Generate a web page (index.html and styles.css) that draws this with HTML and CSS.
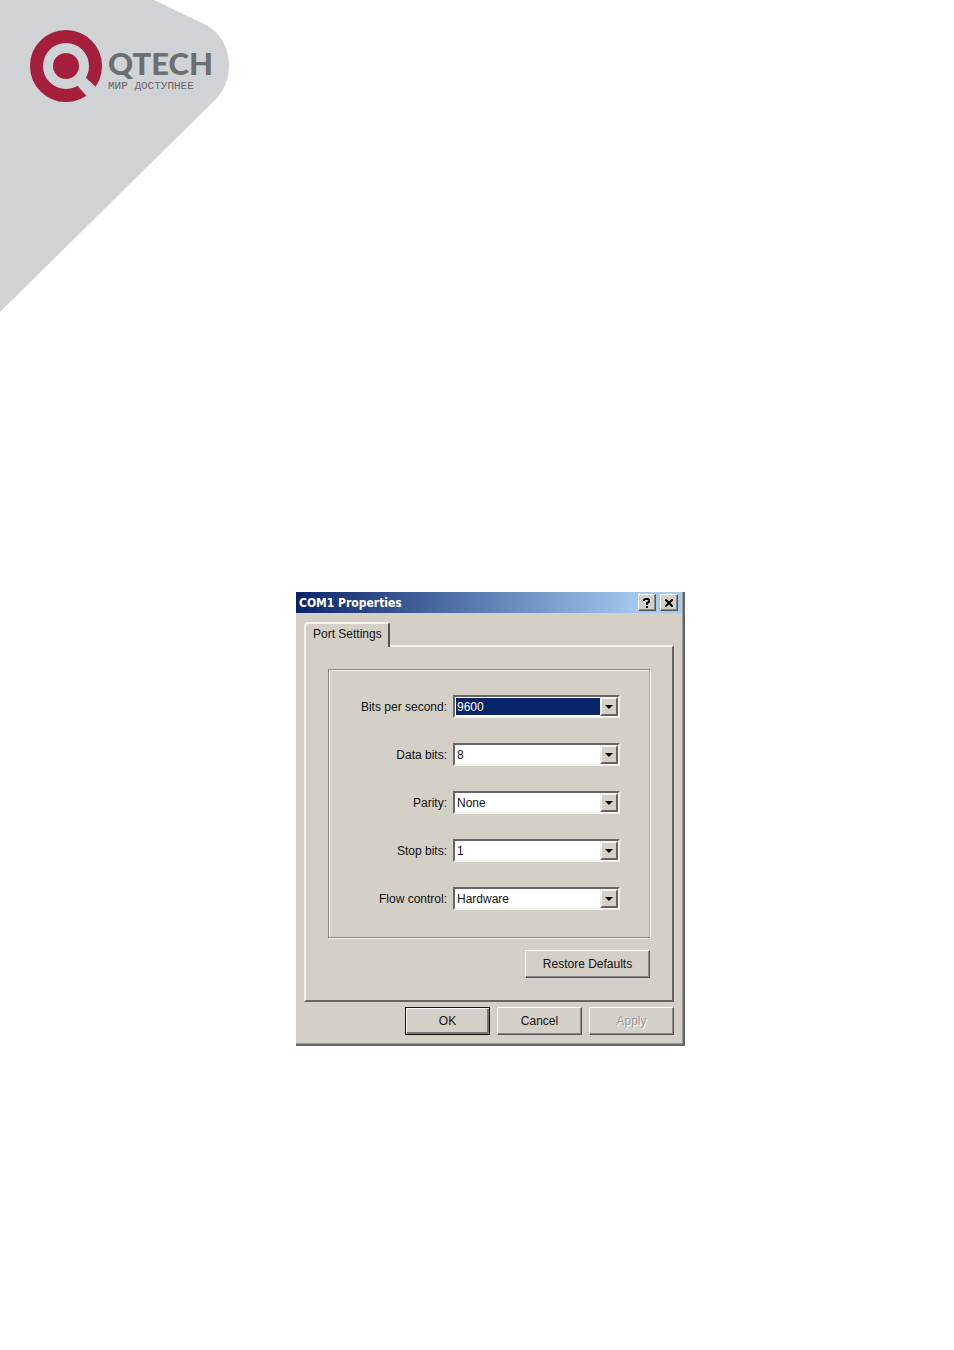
FILE: index.html
```html
<!DOCTYPE html>
<html lang="en">
<head>
<meta charset="utf-8">
<title>COM1 Properties</title>
<link rel="stylesheet" href="styles.css">
</head>
<body>
<header class="banner">
  <svg class="banner-shape" width="230" height="312" viewBox="0 0 230 312" aria-hidden="true">
    <path d="M0 0H154L204 24C221 32 229 49 229 65C229 80 224 91 215 100L0 312Z" fill="#d0d3d6"/>
  </svg>
  <div class="brand">
    <svg class="brand-mark" width="73" height="73" viewBox="29 29 73 73" aria-hidden="true">
      <circle cx="66" cy="66" r="29.5" fill="none" stroke="#a51e3b" stroke-width="13"/>
      <path d="M81 73L100 91L91 101L75 83Z" fill="#d0d3d6"/>
      <circle cx="66" cy="66" r="13" fill="#a51e3b"/>
    </svg>
    <div class="brand-text" lang="ru">
      <span class="brand-name">QTECH</span>
      <span class="brand-tagline">МИР ДОСТУПНЕЕ</span>
    </div>
  </div>
</header>
<main class="page">
  <section class="dialog" role="dialog" aria-labelledby="dialog-title">
    <div class="titlebar">
      <h1 class="title" id="dialog-title">COM1 Properties</h1>
      <button class="title-button" type="button" aria-label="Help">
        <svg width="8" height="10" viewBox="0 0 8 10" aria-hidden="true"><path d="M1 3V2L2 1H5L6 2V4L4 5V7M4 8V10" fill="none" stroke="#000" stroke-width="2"/></svg>
      </button>
      <button class="title-button" type="button" aria-label="Close">
        <svg width="8" height="8" viewBox="0 0 8 8" aria-hidden="true"><path d="M0 0L8 8M8 0L0 8" fill="none" stroke="#000" stroke-width="2"/></svg>
      </button>
    </div>
    <form class="dialog-body">
      <button class="tab" type="button" role="tab" aria-selected="true">Port Settings</button>
      <div class="panel">
        <div class="settings">
          <label for="speed">Bits per second:</label>
          <div class="combo"><select class="selected" id="speed"><option>9600</option></select><span class="arrow"></span></div>
          <label for="data">Data bits:</label>
          <div class="combo"><select id="data"><option>8</option></select><span class="arrow"></span></div>
          <label for="parity">Parity:</label>
          <div class="combo"><select id="parity"><option>None</option></select><span class="arrow"></span></div>
          <label for="stop">Stop bits:</label>
          <div class="combo"><select id="stop"><option>1</option></select><span class="arrow"></span></div>
          <label for="flow">Flow control:</label>
          <div class="combo"><select id="flow"><option>Hardware</option></select><span class="arrow"></span></div>
        </div>
        <button class="button restore" type="button">Restore Defaults</button>
      </div>
      <div class="actions">
        <button class="button default" type="button">OK</button>
        <button class="button" type="button">Cancel</button>
        <button class="button" type="button" disabled>Apply</button>
      </div>
    </form>
  </section>
</main>
</body>
</html>
```
FILE: styles.css
```css
* {
  box-sizing: border-box;
}

body {
  margin: 0;
  background: #fff;
  color: #111;
  font: 12px/16px "Liberation Sans", Arial, sans-serif;
}

.banner {
  display: grid;
  justify-items: start;
  align-items: start;
}

.banner-shape,
.brand {
  grid-area: 1 / 1;
}

.banner-shape,
.brand-mark {
  display: block;
}

.brand {
  display: flex;
  align-items: center;
  gap: 6px;
  padding: 29px;
}

.brand-text {
  display: flex;
  flex-direction: column;
  gap: 2px;
  padding-top: 9px;
}

.brand-name {
  color: #6d6e70;
  font: 900 31px/30px Lato, sans-serif;
}

.brand-tagline {
  color: #66676a;
  font: 11px/12px "Liberation Mono", monospace;
}

.page {
  display: flex;
  justify-content: center;
  padding: 280px 0 32px 27px;
}

.dialog {
  width: 100%;
  max-width: 389px;
  background: #d4d0c8;
  border: solid #666;
  border-width: 0 2px 2px 0;
  box-shadow: inset -1px -1px #999;
}

.titlebar {
  display: flex;
  align-items: center;
  gap: 4px;
  height: 21px;
  margin-right: 1px;
  padding: 0 4px 0 3px;
  background: linear-gradient(90deg, #0a246a, #a6caf0 90%);
}

.title {
  flex: 1;
  margin: 0;
  color: #fff;
  font: bold 12px/20px "DejaVu Sans Condensed", "DejaVu Sans", sans-serif;
}

.title-button,
.button {
  border: 1px solid;
  border-color: #fff #555 #555 #fff;
  box-shadow: inset -1px -1px #888;
  background: #d4d0c8;
  color: #111;
}

.title-button {
  display: flex;
  align-items: center;
  justify-content: center;
  width: 18px;
  height: 17px;
  padding: 0;
}

.dialog-body {
  padding: 9px 9px 9px 8px;
}

.tab {
  display: block;
  position: relative;
  height: 25px;
  margin-bottom: -2px;
  padding: 0 6px 4px 7px;
  border: 2px solid;
  border-color: #f4f3f0 #555 transparent #f4f3f0;
  border-bottom: 0;
  border-radius: 4px 3px 0 0;
  background: #d4d0c8;
  color: #111;
  font: inherit;
}

.panel {
  display: flex;
  flex-direction: column;
  gap: 12px;
  padding: 22px;
  border: 2px solid;
  border-color: #f4f3f0 #666 #666 #f4f3f0;
}

.settings {
  display: grid;
  grid-template-columns: 1fr 167px;
  align-items: center;
  gap: 25px 6px;
  padding: 25px 29px 27px 4px;
  border: 1px solid #888;
  border-right-color: #aaa;
  box-shadow: inset 1px 1px #f4f3f0, 1px 1px #f4f3f0;
}

label {
  text-align: right;
}

.combo {
  display: grid;
  grid-template-columns: 1fr 18px;
  height: 23px;
  border: 2px solid;
  border-color: #666 #f4f3f0 #f4f3f0 #666;
  background: #fff;
}

.combo select {
  grid-area: 1 / 1 / 2 / 3;
  appearance: none;
  width: 100%;
  height: 19px;
  margin: 0;
  padding: 0 20px 0 2px;
  border: 0;
  border-radius: 0;
  outline: 0;
  background: #fff;
  color: #111;
  font: inherit;
}

.combo .selected {
  background: #0a246a;
  border: 1px solid #fff;
  padding-left: 1px;
  color: #fff;
}

.arrow {
  grid-area: 1 / 2;
  z-index: 1;
  display: grid;
  place-items: center;
  pointer-events: none;
  background: #d4d0c8;
  border: 2px solid;
  border-color: #f4f3f0 #666 #666 #f4f3f0;
}

.arrow::before {
  content: "";
  border: 4px solid transparent;
  border-top-color: #000;
  border-bottom: 0;
}

.button {
  height: 28px;
  padding: 0 8px;
  font: inherit;
}

.restore {
  align-self: flex-end;
  width: 125px;
}

.actions {
  display: flex;
  justify-content: flex-end;
  gap: 7px;
  padding-top: 5px;
}

.actions .button {
  width: 85px;
}

.actions .default {
  border-color: #111;
  box-shadow: inset 1px 1px #fff, inset -2px -2px #777;
}

.button:disabled {
  color: #999;
  text-shadow: 1px 1px #fff;
}
```
